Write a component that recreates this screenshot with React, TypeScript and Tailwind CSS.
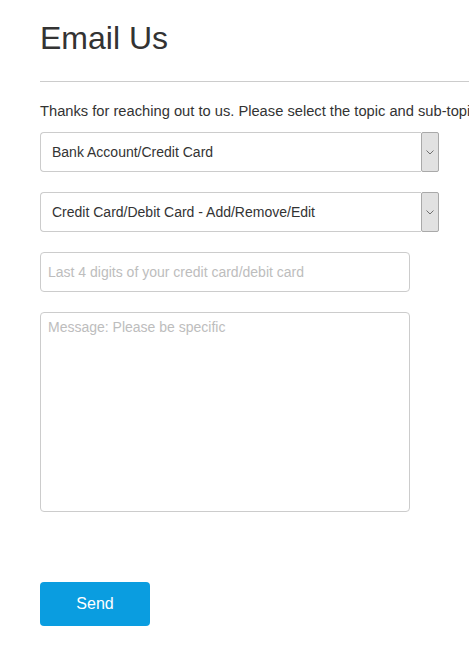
import React from 'react';

// Fake select that mimics the old-style native dropdown with a grey arrow box
const SelectBox: React.FC<{ value: string }> = ({ value }) => {
  return (
    <div className="flex h-[40px] w-[399px] items-stretch">
      <div className="flex flex-1 items-center rounded-l-[4px] border border-r-0 border-[#cccccc] bg-white pl-[11px] text-[14px] text-[#333333]">
        {value}
      </div>
      <div className="flex w-[18px] items-center justify-center rounded-[2px] border border-[#a9a9a9] bg-[#e1e1e1]">
        <svg width="8" height="5" viewBox="0 0 8 5" fill="none">
          <path d="M0.5 0.5 L4 4 L7.5 0.5" stroke="#707070" strokeWidth="1" />
        </svg>
      </div>
    </div>
  );
};

const App: React.FC = () => {
  return (
    <div className="min-h-[648px] w-[469px] overflow-hidden bg-white font-['Liberation_Sans',Arial,sans-serif] text-[#333333]">
      <div className="pl-[40px]">
        {/* Heading */}
        <h1 className="mt-[20px] text-[32px] leading-[36px] font-normal text-[#333333]">Email Us</h1>
        <div className="mt-[25px] h-px bg-[#cccccc]" />

        {/* Intro */}
        <p className="mt-[19px] whitespace-nowrap text-[14.7px] leading-[20px]">
          Thanks for reaching out to us. Please select the topic and sub-topic that best describes your question.
        </p>

        {/* Form */}
        <div className="mt-[11px] flex flex-col">
          <SelectBox value="Bank Account/Credit Card" />
          <div className="mt-[20px]">
            <SelectBox value="Credit Card/Debit Card - Add/Remove/Edit" />
          </div>
          <input
            type="text"
            placeholder="Last 4 digits of your credit card/debit card"
            className="mt-[20px] h-[40px] w-[370px] rounded-[4px] border border-[#cccccc] px-[7px] text-[14px] text-[#333333] outline-none placeholder:text-[#bdbdbd]"
          />
          <textarea
            placeholder="Message: Please be specific"
            className="mt-[20px] h-[200px] w-[370px] resize-none rounded-[4px] border border-[#cccccc] px-[7px] pt-[4px] text-[14px] leading-[20px] text-[#333333] outline-none placeholder:text-[#bdbdbd]"
          />
          <button
            type="button"
            className="mt-[70px] h-[44px] w-[110px] rounded-[4px] bg-[#0a9de0] text-[16px] text-white"
          >
            Send
          </button>
        </div>
      </div>
    </div>
  );
};

export default App;
